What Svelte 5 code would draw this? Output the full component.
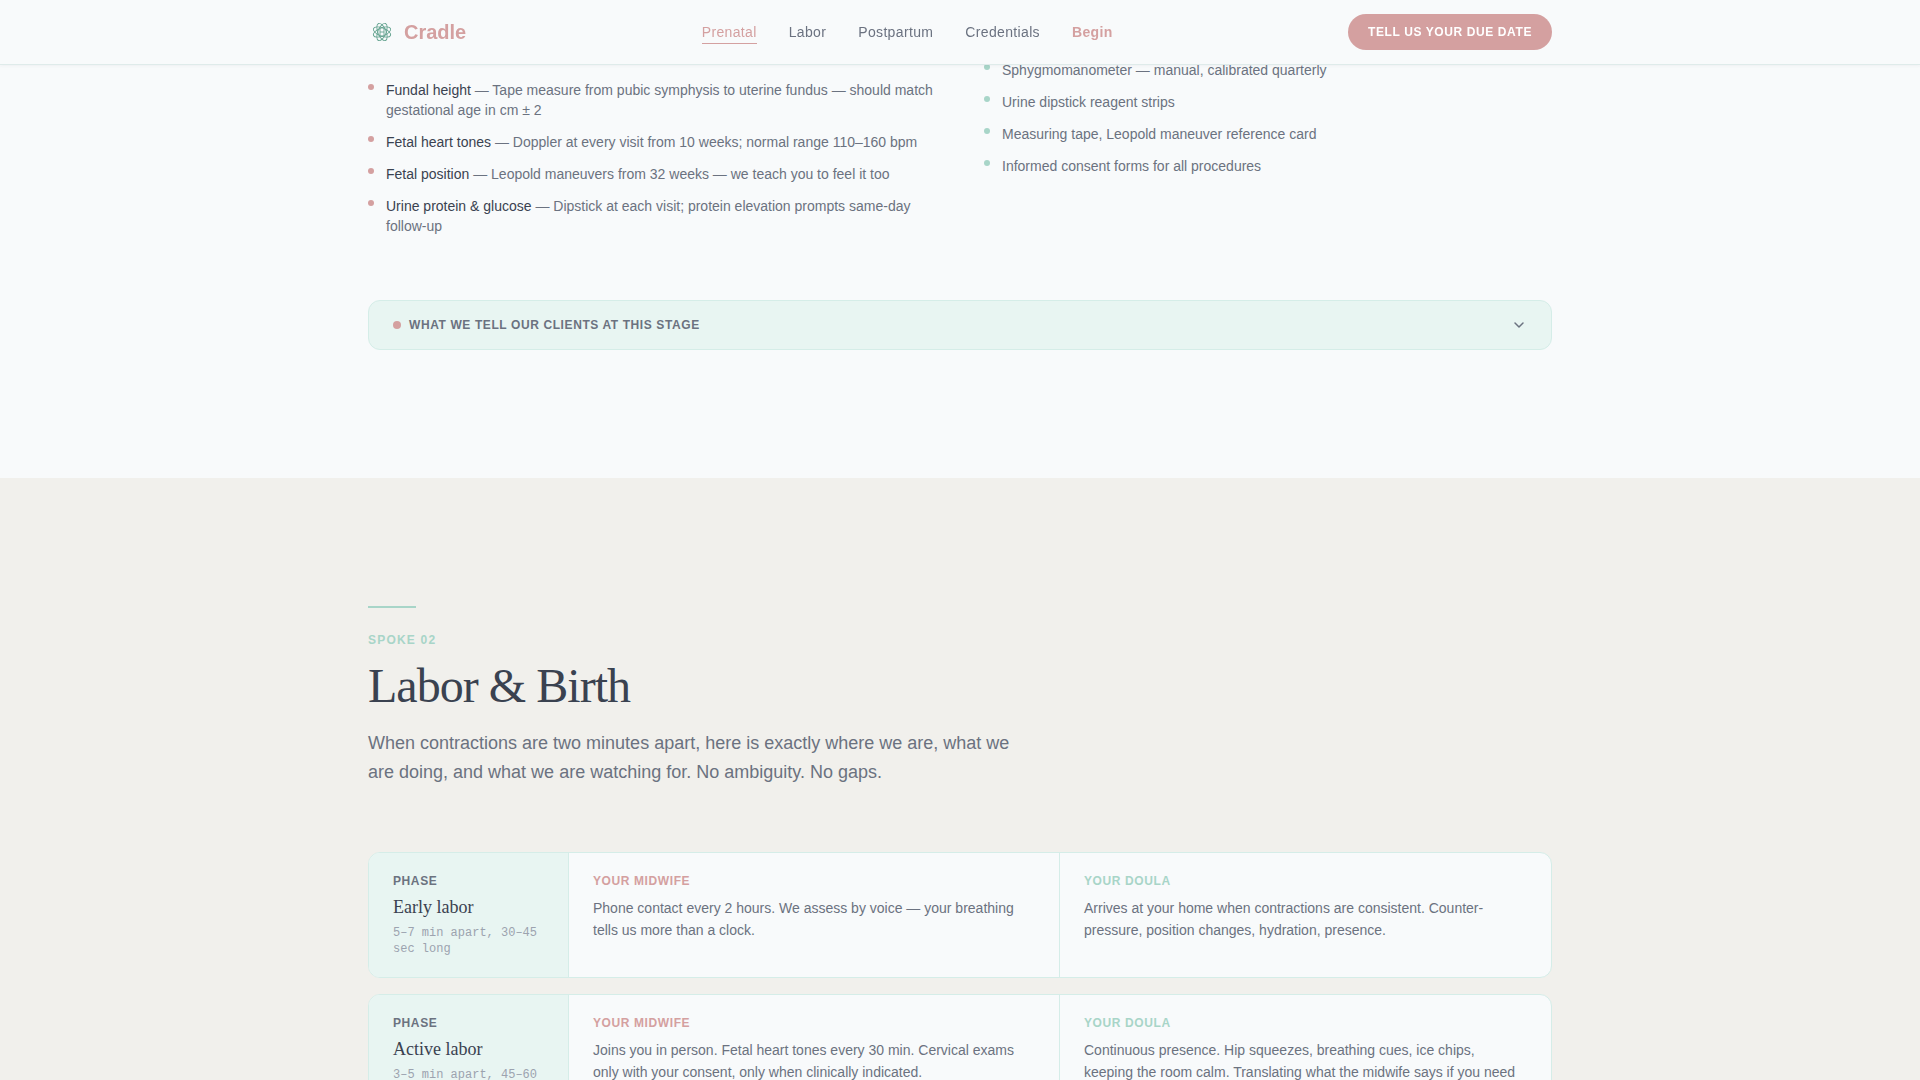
<script>
  const links = [
    { label: 'Prenatal', href: '#prenatal', kind: 'active' },
    { label: 'Labor', href: '#labor', kind: '' },
    { label: 'Postpartum', href: '#postpartum', kind: '' },
    { label: 'Credentials', href: '#credentials', kind: '' },
    { label: 'Begin', href: '#begin', kind: 'strong' },
  ];

  const checks = [
    { name: 'Fundal height', text: 'Tape measure from pubic symphysis to uterine fundus — should match gestational age in cm ± 2' },
    { name: 'Fetal heart tones', text: 'Doppler at every visit from 10 weeks; normal range 110–160 bpm' },
    { name: 'Fetal position', text: 'Leopold maneuvers from 32 weeks — we teach you to feel it too' },
    { name: 'Urine protein & glucose', text: 'Dipstick at each visit; protein elevation prompts same-day follow-up' },
  ];

  const tools = [
    'Sphygmomanometer — manual, calibrated quarterly',
    'Urine dipstick reagent strips',
    'Measuring tape, Leopold maneuver reference card',
    'Informed consent forms for all procedures',
  ];

  const phases = [
    {
      name: 'Early labor',
      timing: '5–7 min apart, 30–45 sec long',
      midwife: 'Phone contact every 2 hours. We assess by voice — your breathing tells us more than a clock.',
      doula: 'Arrives at your home when contractions are consistent. Counter-pressure, position changes, hydration, presence.',
    },
    {
      name: 'Active labor',
      timing: '3–5 min apart, 45–60 sec long',
      midwife: 'Joins you in person. Fetal heart tones every 30 min. Cervical exams only with your consent, only when clinically indicated.',
      doula: 'Continuous presence. Hip squeezes, breathing cues, ice chips, keeping the room calm. Translating what the midwife says if you need it.',
    },
  ];

  const petals = [22.5, 67.5, 112.5, 157.5];
  let open = $state(false);
</script>

<div class="page">
  <header class="bar">
    <div class="wrap bar-row">
      <a class="brand" href="#top">
        <svg width="28" height="28" viewBox="0 0 28 28" fill="none" stroke="#66a491" stroke-width="0.9" aria-hidden="true">
          {#each petals as angle}
            <ellipse cx="14" cy="14" rx="9.2" ry="4.1" transform="rotate({angle} 14 14)" />
          {/each}
          <path d="M12 11v6M16 11v6M12 14h4" />
        </svg>
        <span>Cradle</span>
      </a>
      <nav class="links" aria-label="Main">
        {#each links as link}
          <a class="link {link.kind}" href={link.href}>{link.label}</a>
        {/each}
      </nav>
      <button class="cta" type="button">Tell us your due date</button>
    </div>
  </header>

  <main>
    <section class="prenatal" id="prenatal">
      <div class="wrap">
        <div class="columns">
          <ul class="list checks">
            {#each checks as item}
              <li><span><b>{item.name}</b> — {item.text}</span></li>
            {/each}
          </ul>
          <ul class="list tools">
            {#each tools as item}
              <li><span>{item}</span></li>
            {/each}
          </ul>
        </div>
        <button class="disclosure" type="button" aria-expanded={open} onclick={() => (open = !open)}>
          <span class="dot"></span>
          <span class="disclosure-label">What we tell our clients at this stage</span>
          <svg width="16" height="16" viewBox="0 0 16 16" fill="none" stroke="currentColor" stroke-width="1.5" stroke-linecap="round" stroke-linejoin="round" aria-hidden="true">
            <path d="M4 6l4 4 4-4" />
          </svg>
        </button>
      </div>
    </section>

    <section class="labor" id="labor">
      <div class="wrap">
        <div class="rule"></div>
        <p class="eyebrow">Spoke 02</p>
        <h2>Labor &amp; Birth</h2>
        <p class="lead">
          When contractions are two minutes apart, here is exactly where we are, what we are doing, and what we are watching for. No ambiguity. No gaps.
        </p>
        <div class="phases">
          {#each phases as phase}
            <article class="card">
              <div class="cell phase">
                <p class="label">Phase</p>
                <h3>{phase.name}</h3>
                <p class="timing">{phase.timing}</p>
              </div>
              <div class="cell">
                <p class="label midwife">Your midwife</p>
                <p class="body">{phase.midwife}</p>
              </div>
              <div class="cell">
                <p class="label doula">Your doula</p>
                <p class="body">{phase.doula}</p>
              </div>
            </article>
          {/each}
        </div>
      </div>
    </section>
  </main>
</div>

<style>
  :global(body) {
    margin: 0;
    background: #f1f0ec;
  }

  .page {
    --pink: #d4a0a0;
    --mint: #a8d5c8;
    --mint-soft: #e8f5f2;
    --line: #d5ede8;
    --ink: #3a4250;
    --muted: #6b7280;
    --paper: #f8fafb;
    font-family: 'Liberation Sans', Arial, sans-serif;
    font-size: 14px;
    line-height: 20px;
    color: var(--muted);
  }

  p, h2, h3, ul {
    margin: 0;
    padding: 0;
  }

  .wrap {
    box-sizing: border-box;
    max-width: 1280px;
    margin: 0 auto;
    padding: 0 48px;
  }

  .bar {
    position: fixed;
    inset: 0 0 auto;
    z-index: 1;
    background: var(--paper);
    border-bottom: 1px solid #dfebea;
    box-shadow: 0 1px 3px rgba(58, 66, 80, 0.05);
  }

  .bar-row {
    display: flex;
    align-items: center;
    justify-content: space-between;
    height: 64px;
  }

  .brand {
    display: flex;
    align-items: center;
    gap: 8px;
    color: var(--pink);
    font-size: 20px;
    font-weight: 700;
    text-decoration: none;
  }

  .links {
    display: flex;
    gap: 32px;
  }

  .link {
    padding: 2px 0 1px;
    border-bottom: 1px solid transparent;
    color: var(--muted);
    letter-spacing: 0.025em;
    text-decoration: none;
  }

  .link.active {
    color: var(--pink);
    border-color: var(--pink);
  }

  .link.strong {
    color: var(--pink);
    font-weight: 700;
  }

  .cta {
    height: 36px;
    padding: 0 20px;
    border: 0;
    border-radius: 18px;
    background: var(--pink);
    color: #fff;
    font: 700 12px/16px 'Liberation Sans', Arial, sans-serif;
    letter-spacing: 0.05em;
    text-transform: uppercase;
  }

  .prenatal {
    padding: 60px 0 128px;
    background: var(--paper);
  }

  .columns {
    display: grid;
    grid-template-columns: 1fr 1fr;
    gap: 48px;
  }

  .list {
    display: flex;
    flex-direction: column;
    gap: 12px;
    list-style: none;
  }

  .checks {
    padding-top: 20px;
  }

  .list li {
    display: flex;
    gap: 12px;
  }

  .list li::before {
    content: '';
    flex: none;
    width: 6px;
    height: 6px;
    margin-top: 4px;
    border-radius: 50%;
    background: var(--pink);
  }

  .tools li::before {
    background: var(--mint);
  }

  .list b {
    color: var(--ink);
    font-weight: 400;
  }

  .disclosure {
    display: flex;
    align-items: center;
    gap: 8px;
    width: 100%;
    height: 50px;
    margin-top: 64px;
    padding: 0 24px;
    border: 1px solid var(--line);
    border-radius: 12px;
    background: var(--mint-soft);
    color: var(--muted);
    font: 700 12px/16px 'Liberation Sans', Arial, sans-serif;
    letter-spacing: 0.05em;
    text-align: left;
    text-transform: uppercase;
  }

  .dot {
    width: 8px;
    height: 8px;
    border-radius: 50%;
    background: var(--pink);
  }

  .disclosure-label {
    flex: 1;
  }

  .labor {
    padding: 128px 0;
    background: #f1f0ec;
  }

  .rule {
    width: 48px;
    height: 2px;
    background: var(--mint);
  }

  .eyebrow {
    margin-top: 24px;
    color: var(--mint);
    font-size: 12px;
    font-weight: 700;
    line-height: 16px;
    letter-spacing: 0.1em;
    text-transform: uppercase;
  }

  h2 {
    margin-top: 12px;
    color: var(--ink);
    font: 400 48px/52px 'Liberation Serif', 'Times New Roman', serif;
    letter-spacing: -0.02em;
  }

  .lead {
    max-width: 650px;
    margin-top: 17px;
    font-size: 18px;
    line-height: 29px;
  }

  .phases {
    display: grid;
    gap: 16px;
    margin-top: 65px;
  }

  .card {
    display: grid;
    grid-template-columns: 200px 1fr 1fr;
    overflow: hidden;
    border: 1px solid var(--line);
    border-radius: 12px;
    background: var(--paper);
  }

  .cell {
    padding: 20px 24px;
    border-right: 1px solid var(--line);
  }

  .cell:last-child {
    border-right: 0;
  }

  .phase {
    background: var(--mint-soft);
  }

  .label {
    margin-bottom: 8px;
    font-size: 12px;
    font-weight: 700;
    line-height: 16px;
    letter-spacing: 0.05em;
    text-transform: uppercase;
  }

  .midwife {
    color: var(--pink);
  }

  .doula {
    color: var(--mint);
  }

  h3 {
    color: var(--ink);
    font: 400 18px/20px 'Liberation Serif', 'Times New Roman', serif;
  }

  .timing {
    margin-top: 8px;
    color: #9ca3af;
    font: 12px/16px 'Liberation Mono', monospace;
  }

  .body {
    line-height: 22px;
  }
</style>
